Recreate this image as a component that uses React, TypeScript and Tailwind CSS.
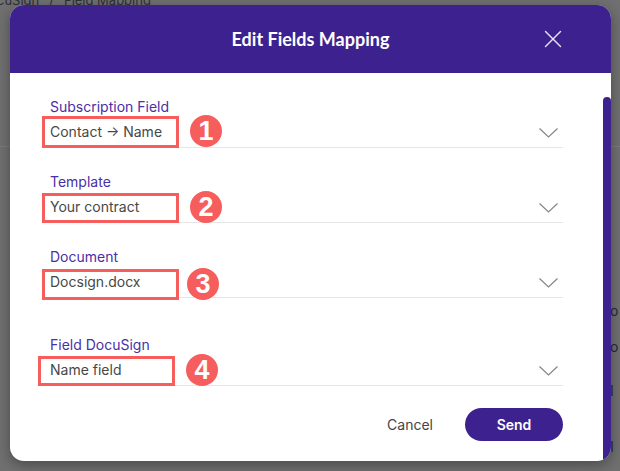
import { X } from "lucide-react";

type Field = {
  label: string;
  value: string;
  num: number;
  box: { left: number; top: number; width: number; height: number };
  dot: { left: number; top: number };
  gapTop: number;
};

const fields: Field[] = [
  {
    label: "Subscription Field",
    value: "Contact → Name",
    num: 1,
    box: { left: -8, top: 1, width: 137, height: 32 },
    dot: { left: 140, top: 0 },
    gapTop: 0,
  },
  {
    label: "Template",
    value: "Your contract",
    num: 2,
    box: { left: -8, top: 3, width: 137, height: 30 },
    dot: { left: 140, top: 1 },
    gapTop: 26,
  },
  {
    label: "Document",
    value: "Docsign.docx",
    num: 3,
    box: { left: -8, top: 4, width: 137, height: 31 },
    dot: { left: 137, top: 3 },
    gapTop: 26,
  },
  {
    label: "Field DocuSign",
    value: "Name field",
    num: 4,
    box: { left: -12, top: 3, width: 137, height: 30 },
    dot: { left: 136, top: 1 },
    gapTop: 39,
  },
];

function Chevron() {
  return (
    <svg width="19" height="10" viewBox="0 0 19 10" fill="none" className="mr-[5px] mt-[4px]">
      <path d="M0.5 0.5 L9.5 9 L18.5 0.5" stroke="#858585" strokeWidth="1.2" />
    </svg>
  );
}

function SelectField({ field }: { field: Field }) {
  return (
    <div style={{ marginTop: field.gapTop }}>
      <p className="h-[16px] text-[14px] leading-[16px] text-[#4a2fa6]">{field.label}</p>
      <div className="relative flex h-[33px] items-center justify-between border-b border-[#e6e6e6]">
        <span className="text-[14px] text-[#474747]">{field.value}</span>
        <Chevron />
        {/* annotation overlay */}
        <div
          className="absolute border-[3px] border-[#f65d5d]"
          style={{
            left: field.box.left,
            top: field.box.top,
            width: field.box.width,
            height: field.box.height,
          }}
        />
        <div
          className="absolute flex h-[32px] w-[32px] items-center justify-center rounded-full bg-[#f65d5d] text-[27px] font-bold leading-none text-white"
          style={{ left: field.dot.left, top: field.dot.top, fontFamily: '"Liberation Sans", Arial, sans-serif' }}
        >
          {field.num}
        </div>
      </div>
    </div>
  );
}

export default function App() {
  return (
    <div
      className="relative h-[471px] w-[620px] overflow-hidden bg-[#707070]"
      style={{ fontFamily: 'Inter, "Noto Sans", sans-serif' }}
    >
      {/* page behind the overlay */}
      <div className="flex flex-col">
        <p className="-mt-[7px] h-[14px] text-[13px] leading-[14px] text-[#2f2f3a]">
          <span className="-ml-[3px]">cuSign</span>
          <span className="mx-[10px]">/</span>
          <span>Field Mapping</span>
        </p>
        <div className="mt-[139px] border-b border-[#7c7c7c]" />
        <div className="ml-[600px] mt-[156px] flex flex-col text-[14px] leading-[16px] text-[#262640]">
          <span>Do</span>
          <span className="mt-[20px]">Do</span>
          <span className="mt-[28px]">Cl</span>
          <span className="mt-[40px]">Cl</span>
        </div>
      </div>

      {/* modal */}
      <div className="absolute left-[10px] top-[5px] flex h-[456px] w-[601px] flex-col overflow-hidden rounded-[14px] bg-white shadow-[0_4px_14px_rgba(0,0,0,0.35)]">
        <div className="relative flex h-[68px] shrink-0 items-center justify-center bg-[#3d228f]">
          <h2
            className="text-[18px] font-bold text-white"
            style={{ fontFamily: 'Lato, "Open Sans", sans-serif' }}
          >
            Edit Fields Mapping
          </h2>
          <button className="absolute right-[43px] top-[19px] text-[#e6e1f3]">
            <X size={30} strokeWidth={1.1} />
          </button>
        </div>

        <div className="flex flex-1">
          <div className="flex flex-1 flex-col pl-[40px] pr-[40px] pt-[26px]">
            {fields.map((f) => (
              <SelectField key={f.num} field={f} />
            ))}
            <div className="mt-[22px] flex items-center justify-end">
              <button className="mr-[10px] px-[22px] text-[14px] text-[#444444]">Cancel</button>
              <button className="h-[33px] w-[98px] rounded-full bg-[#3d228f] text-[14px] font-semibold text-white">
                Send
              </button>
            </div>
          </div>
          <div className="w-[8px] pt-[24px]">
            <div className="h-full rounded-t-full bg-[#3d228f]" />
          </div>
        </div>
      </div>
    </div>
  );
}
